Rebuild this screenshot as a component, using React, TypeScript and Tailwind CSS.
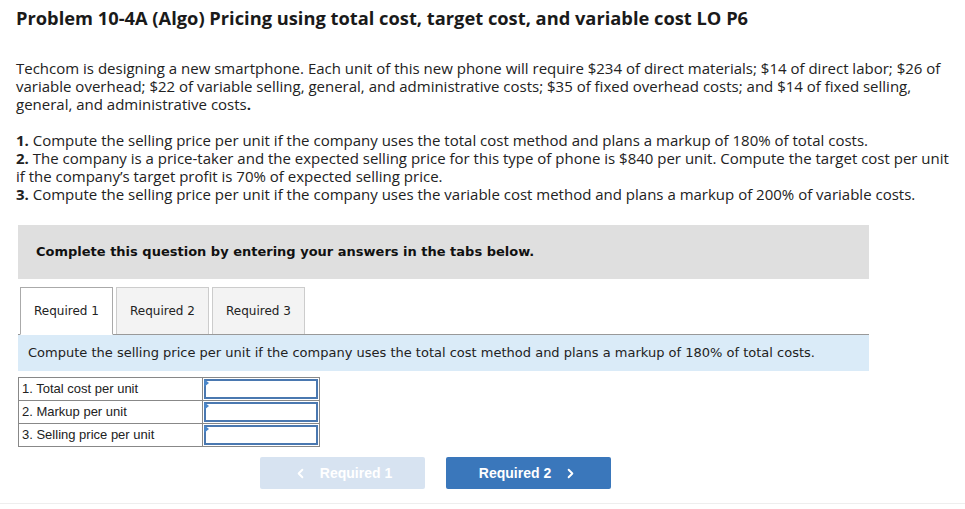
import { ChevronLeft, ChevronRight } from 'lucide-react';

const rows = ['1. Total cost per unit', '2. Markup per unit', '3. Selling price per unit'];

export default function App() {
  return (
    <div className="w-[965px] h-[509px] bg-white text-[#222] font-['Open_Sans',sans-serif] overflow-hidden">
      <div className="px-4 pt-[7px] whitespace-nowrap">
        <h1 className="text-[18.3px] font-bold leading-[22px] text-[#1a1a1a]">
          Problem 10-4A (Algo) Pricing using total cost, target cost, and variable cost LO P6
        </h1>

        <p className="mt-[30px] text-[15px] leading-[18px]">
          Techcom is designing a new smartphone. Each unit of this new phone will require $234 of direct materials; $14 of direct labor; $26 of
          <br />
          variable overhead; $22 of variable selling, general, and administrative costs; $35 of fixed overhead costs; and $14 of fixed selling,
          <br />
          general, and administrative costs<b>.</b>
        </p>

        <div className="mt-[18px] text-[15px] leading-[18px]">
          <p><b>1.</b> Compute the selling price per unit if the company uses the total cost method and plans a markup of 180% of total costs.</p>
          <p>
            <b>2.</b> The company is a price-taker and the expected selling price for this type of phone is $840 per unit. Compute the target cost per unit
            <br />
            if the company’s target profit is 70% of expected selling price.
          </p>
          <p><b>3.</b> Compute the selling price per unit if the company uses the variable cost method and plans a markup of 200% of variable costs.</p>
        </div>
      </div>

      <div className="ml-[18px] w-[851px] font-['Verdana','DejaVu_Sans',sans-serif]">
        <div className="mt-[22px] h-[54px] bg-[#dfdfdf] flex items-center pl-[18px]">
          <span className="text-[13px] font-bold text-[#111]">Complete this question by entering your answers in the tabs below.</span>
        </div>

        <div className="mt-[8px] flex items-end gap-[3px] pl-[2px] border-b border-[#999]">
          <div className="w-[93px] h-[48px] -mb-px bg-white border border-[#aaa] border-b-white flex items-center justify-center text-[12px] text-[#222]">
            Required 1
          </div>
          <div className="w-[93px] h-[47px] bg-[#f3f3f3] border border-[#ccc] border-b-0 flex items-center justify-center text-[12px] text-[#222]">
            Required 2
          </div>
          <div className="w-[93px] h-[47px] bg-[#f3f3f3] border border-[#ccc] border-b-0 flex items-center justify-center text-[12px] text-[#222]">
            Required 3
          </div>
        </div>

        <div className="h-[36px] bg-[#daebf8] flex items-center pl-[10px] text-[13px] text-[#222]">
          Compute the selling price per unit if the company uses the total cost method and plans a markup of 180% of total costs.
        </div>

        <table className="mt-[6px] border-collapse font-['Liberation_Sans',Arial,sans-serif] text-[13px] text-[#222]">
          <tbody>
            {rows.map(r => (
              <tr key={r} className="h-[23px]">
                <td className="w-[184px] border border-[#888] pl-[3px] py-0">{r}</td>
                <td className="w-[117px] border border-[#888] p-0 relative">
                  <div className="absolute inset-[1px] border-2 border-[#4a78b0]" />
                  <div className="absolute left-[1px] top-[1px] w-0 h-0 border-y-[4px] border-y-transparent border-l-[5px] border-l-[#4a86c8]" />
                </td>
              </tr>
            ))}
          </tbody>
        </table>

        <div className="mt-[10px] ml-[242px] flex gap-[21px] font-['Liberation_Sans',Arial,sans-serif]">
          <div className="w-[165px] h-[32px] rounded-[2px] bg-[#d7e3f1] flex items-center justify-center gap-[12px] text-white text-[14px] font-bold">
            <ChevronLeft size={15} strokeWidth={3} />
            Required 1
          </div>
          <div className="w-[165px] h-[32px] rounded-[2px] bg-[#3a77bb] flex items-center justify-center gap-[12px] text-white text-[14px] font-bold">
            Required 2
            <ChevronRight size={15} strokeWidth={3} />
          </div>
        </div>
      </div>
      <div className="mt-[14px] border-t border-[#eee]" />
    </div>
  );
}
